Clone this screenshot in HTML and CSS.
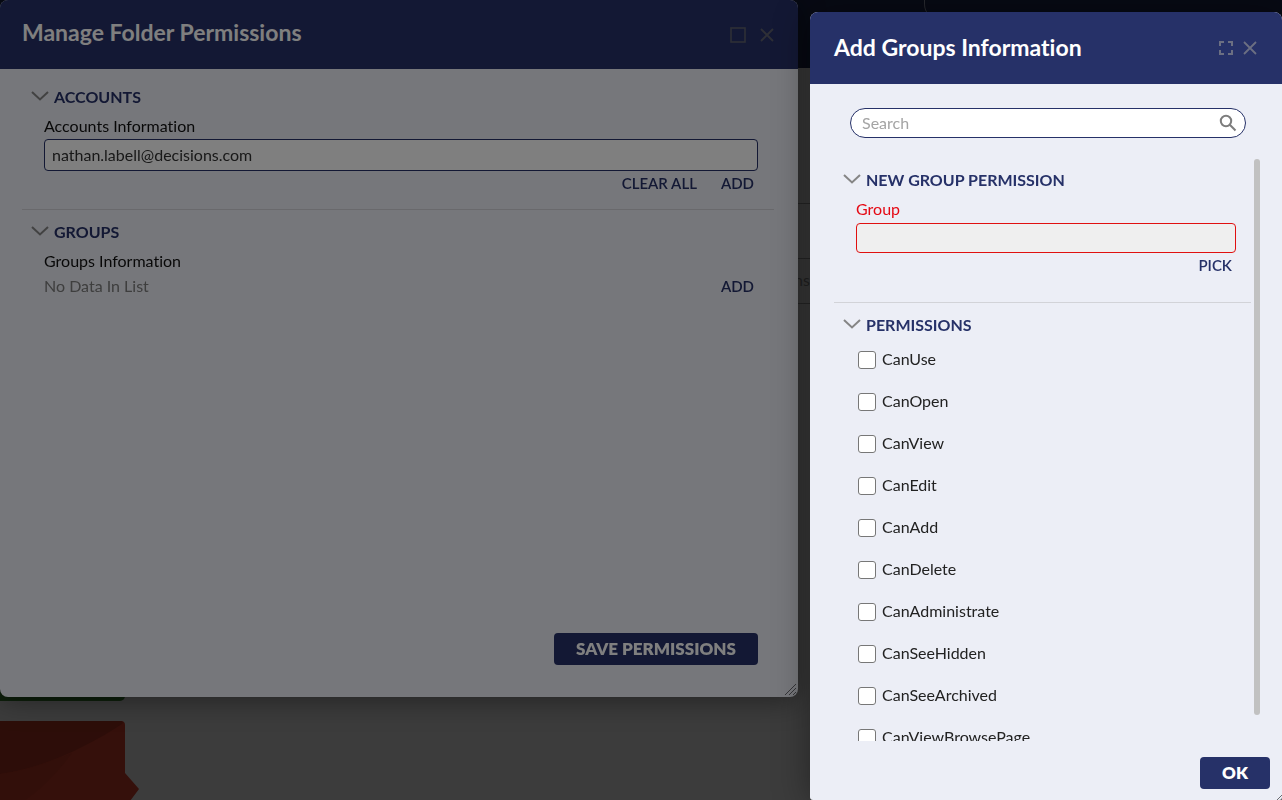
FILE: index.html
```html
<!DOCTYPE html>
<html lang="en">
<head>
<meta charset="utf-8">
<title>Manage Folder Permissions</title>
<link rel="stylesheet" href="styles.css">
</head>
<body>
<div class="page">
  <div class="topbar"><span class="topbar-field"></span></div>
  <div class="page-grid">
    <div class="grid-row grid-gap"></div>
    <div class="grid-row grid-filter"></div>
    <div class="grid-row grid-head">ns</div>
  </div>
  <div class="tiles">
    <div class="tile tile-green"></div>
    <svg class="tile-red" width="140" height="80" viewBox="0 0 140 80">
      <path fill="#6a2016" d="M0 0H121Q125 0 125 4V52L139 68L130 80H0Z"/>
      <path fill="#5a1b12" d="M0 0H121Q124 1 122 3C90 24 45 47 0 53Z"/>
      <path fill="#641e14" d="M0 53C30 49 52 40 72 32Q50 62 24 80H0Z"/>
    </svg>
  </div>
</div>

<section class="dialog dialog-main">
  <header class="dialog-header header-main">
    <h1 class="dialog-title">Manage Folder Permissions</h1>
    <div class="window-tools tools-main">
      <button class="icon-button" aria-label="Maximize"><svg width="16" height="16" viewBox="0 0 16 16"><rect x="1" y="1" width="14" height="14" fill="none" stroke="currentColor" stroke-width="1.6"/></svg></button>
      <button class="icon-button" aria-label="Close"><svg width="14" height="14" viewBox="0 0 14 14"><path d="M1 1L13 13M13 1L1 13" stroke="currentColor" stroke-width="1.8"/></svg></button>
    </div>
  </header>
  <div class="main-body">
    <section class="group group-ruled">
      <h2 class="group-title"><svg class="chevron" width="18" height="10" viewBox="0 0 18 10"><path d="M1 1L9 8.5L17 1"/></svg>ACCOUNTS</h2>
      <div class="field">
        <label class="field-label" for="accounts">Accounts Information</label>
        <input class="text-box" id="accounts" type="text" value="nathan.labell@decisions.com">
        <div class="actions"><button class="link-button">CLEAR ALL</button><button class="link-button">ADD</button></div>
      </div>
    </section>
    <section class="group group-second">
      <h2 class="group-title"><svg class="chevron" width="18" height="10" viewBox="0 0 18 10"><path d="M1 1L9 8.5L17 1"/></svg>GROUPS</h2>
      <div class="field">
        <div class="field-label">Groups Information</div>
        <div class="empty-row"><span class="empty-text">No Data In List</span><div class="actions"><button class="link-button">ADD</button></div></div>
      </div>
    </section>
  </div>
  <footer class="main-footer"><button class="primary-button save-button">SAVE PERMISSIONS</button></footer>
  <svg class="grip" width="14" height="14" viewBox="0 0 14 14"><path d="M1 12L12 1M5 12L12 5M9 12L12 9"/></svg>
</section>

<div class="backdrop"></div>

<section class="dialog dialog-side">
  <header class="dialog-header header-side">
    <h1 class="dialog-title">Add Groups Information</h1>
    <div class="window-tools tools-side">
      <button class="icon-button" aria-label="Full screen"><svg width="14" height="14" viewBox="0 0 14 14"><path d="M1 5V1H5M9 1H13V5M13 9V13H9M5 13H1V9" fill="none" stroke="currentColor" stroke-width="2"/></svg></button>
      <button class="icon-button" aria-label="Close"><svg width="14" height="14" viewBox="0 0 14 14"><path d="M1 1L13 13M13 1L1 13" stroke="currentColor" stroke-width="1.8"/></svg></button>
    </div>
  </header>
  <div class="search">
    <input class="search-input" type="text" placeholder="Search" aria-label="Search">
    <svg class="search-icon" width="18" height="18" viewBox="0 0 18 18"><circle cx="7" cy="7" r="5.2"/><path d="M10.8 10.8L16.5 16.5"/></svg>
  </div>
  <div class="scroll">
    <div class="scroll-content">
      <section class="group group-ruled group-pick">
        <h2 class="group-title"><svg class="chevron" width="18" height="10" viewBox="0 0 18 10"><path d="M1 1L9 8.5L17 1"/></svg>NEW GROUP PERMISSION</h2>
        <div class="field">
          <label class="field-label label-error" for="group">Group</label>
          <input class="text-box box-error" id="group" type="text" readonly>
          <div class="actions"><button class="link-button">PICK</button></div>
        </div>
      </section>
      <section class="group group-second">
        <h2 class="group-title"><svg class="chevron" width="18" height="10" viewBox="0 0 18 10"><path d="M1 1L9 8.5L17 1"/></svg>PERMISSIONS</h2>
        <div class="checks">
          <label class="check"><input class="check-box" type="checkbox">CanUse</label>
          <label class="check"><input class="check-box" type="checkbox">CanOpen</label>
          <label class="check"><input class="check-box" type="checkbox">CanView</label>
          <label class="check"><input class="check-box" type="checkbox">CanEdit</label>
          <label class="check"><input class="check-box" type="checkbox">CanAdd</label>
          <label class="check"><input class="check-box" type="checkbox">CanDelete</label>
          <label class="check"><input class="check-box" type="checkbox">CanAdministrate</label>
          <label class="check"><input class="check-box" type="checkbox">CanSeeHidden</label>
          <label class="check"><input class="check-box" type="checkbox">CanSeeArchived</label>
          <label class="check"><input class="check-box" type="checkbox">CanViewBrowsePage</label>
        </div>
      </section>
    </div>
    <div class="scroll-thumb"></div>
  </div>
  <footer class="side-footer"><button class="primary-button ok-button">OK</button></footer>
  <svg class="grip grip-side" width="14" height="14" viewBox="0 0 14 14"><path d="M1 12L12 1M5 12L12 5M9 12L12 9"/></svg>
</section>
</body>
</html>
```
FILE: styles.css
```css
* { box-sizing: border-box; }

html, body { height: 100%; }

body {
  margin: 0;
  overflow: hidden;
  background: #787878;
  font-family: Lato, "Open Sans", sans-serif;
  font-size: 16px;
  font-variant-ligatures: none;
  color: #111;
}

button, input { font: inherit; }

/* Page behind the dialogs */
.page {
  display: flex;
  flex-direction: column;
  height: 100%;
}

.topbar {
  display: flex;
  justify-content: flex-end;
  flex: none;
  height: 68px;
  background: #0f1428;
}

.topbar-field {
  width: 358px;
  height: 20px;
  border-left: 1px solid #50545e;
  border-bottom-left-radius: 16px;
}

.page-grid { margin-left: 780px; }

.grid-row { border-bottom: 1px solid #505050; }
.grid-gap { height: 136px; }
.grid-filter { height: 55px; }
.grid-head { height: 45px; padding-left: 14px; line-height: 42px; color: #484848; }

.tiles {
  display: flex;
  flex-direction: column;
  gap: 20px;
  margin-top: auto;
}

.tile-green {
  width: 125px;
  height: 30px;
  background: #1c4018;
  border-radius: 0 0 5px 0;
}

.tile-red { display: block; margin-bottom: -1px; }

/* Dialog windows */
.dialog {
  position: fixed;
  display: flex;
  flex-direction: column;
  background: #eceef6;
}

.dialog-main {
  top: 0;
  left: 0;
  right: 484px;
  bottom: 103px;
  border-radius: 8px;
  box-shadow: 0 4px 28px rgba(0, 0, 0, 0.4);
}

.dialog-side {
  top: 12px;
  right: 0;
  bottom: 0;
  width: 472px;
  border-radius: 8px 8px 3px 3px;
  box-shadow: 0 4px 36px rgba(0, 0, 0, 0.4);
}

.backdrop {
  position: fixed;
  inset: 0;
  background: rgba(0, 0, 0, 0.5);
}

.dialog-header {
  display: flex;
  align-items: center;
  justify-content: space-between;
  flex: none;
  background: #263168;
  border-radius: 8px 8px 0 0;
}

.header-main { height: 69px; padding: 0 24px 4px 22px; }
.header-side { height: 72px; padding: 0 25px 0 24px; }

.dialog-title {
  margin: 0;
  padding-bottom: 2px;
  font-size: 23px;
  line-height: 30px;
  font-weight: 700;
  color: #fff;
}

.window-tools { display: flex; align-items: center; color: #6b6f82; }
.tools-main { gap: 14px; padding-top: 5px; color: #5c5f6c; }
.tools-side { gap: 10px; }

.icon-button {
  display: flex;
  padding: 0;
  border: 0;
  background: none;
  color: inherit;
}

.main-body { flex: 1; padding: 13px 24px 0 22px; }

.group-ruled { padding-bottom: 14px; border-bottom: 1px solid #d2d3d8; }
.group-second { padding-top: 7px; }

.group-title {
  display: flex;
  align-items: center;
  gap: 5px;
  height: 30px;
  margin: 0;
  padding: 0 0 2px 9px;
  font-size: 16px;
  font-weight: 700;
  color: #263168;
}

.chevron { fill: none; stroke: #858585; stroke-width: 2; }

.field { padding: 0 16px 0 22px; }

.field-label { display: block; line-height: 27px; }

.text-box {
  display: block;
  width: 100%;
  height: 32px;
  padding: 0 7px 2px;
  border: 1px solid #263168;
  border-radius: 4px;
  background: #fff;
  color: #333;
}

.actions {
  display: flex;
  justify-content: flex-end;
  gap: 24px;
  padding-right: 4px;
}

.link-button {
  padding: 0;
  border: 0;
  background: none;
  font-size: 15px;
  line-height: 24px;
  font-weight: 600;
  color: #263168;
}

.empty-row { display: flex; justify-content: space-between; line-height: 24px; }
.empty-text { color: #7c7c7c; }

.primary-button {
  height: 32px;
  padding: 0 0 2px;
  border: 0;
  border-radius: 4px;
  background: #263168;
  font-size: 17px;
  font-weight: 800;
  color: #fff;
}

.main-footer { display: flex; justify-content: flex-end; padding: 0 40px 32px; }
.save-button { width: 204px; }

.grip {
  position: absolute;
  right: 0;
  bottom: 0;
  fill: none;
  stroke: #6a6b70;
  stroke-width: 1;
}

.grip-side { right: -5px; bottom: -5px; }

/* Add Groups dialog */
.search {
  display: flex;
  align-items: center;
  flex: none;
  height: 30px;
  margin: 24px 36px 21px 40px;
  padding: 0 8px 0 11px;
  border: 1px solid #263168;
  border-radius: 15px;
  background: #fff;
}

.search-input {
  flex: 1;
  min-width: 0;
  padding: 0 0 2px;
  border: 0;
  outline: 0;
  background: none;
}

.search-input::placeholder { color: #a4a4a4; }
.search-icon { fill: none; stroke: #7d7d7d; stroke-width: 2; }

.scroll {
  display: flex;
  flex: 1;
  gap: 3px;
  min-height: 0;
  padding: 0 22px 0 24px;
  overflow: hidden;
}

.scroll-content { flex: 1; min-width: 0; padding-top: 6px; }

.scroll-thumb {
  width: 6px;
  height: calc(100% - 26px);
  border-radius: 3px;
  background: #c1c1c1;
}

.group-pick { padding-bottom: 25px; }
.group-pick .field { padding-right: 15px; }
.label-error { line-height: 28px; color: #e50914; }
.box-error { height: 30px; border-color: #e01010; background: #efefef; }

.check { display: flex; height: 42px; line-height: 38px; padding-left: 24px; gap: 6px; color: #222; }

.check-box {
  appearance: none;
  flex: none;
  width: 18px;
  height: 18px;
  margin: 11px 0 0;
  border: 1px solid #777;
  border-radius: 3px;
  background: #fff;
}

.side-footer {
  display: flex;
  justify-content: flex-end;
  flex: none;
  padding: 16px 12px 11px;
}

.ok-button { width: 70px; }
```
